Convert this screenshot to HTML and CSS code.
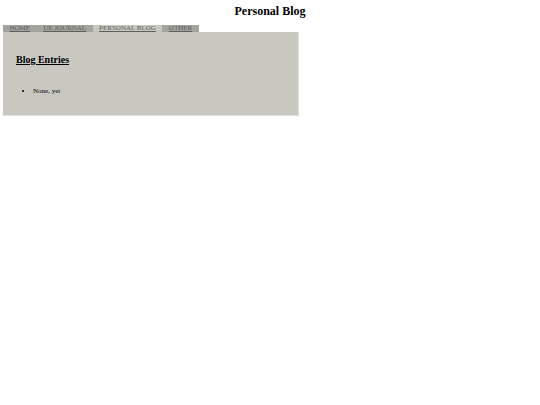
FILE: index.html
```html
<!DOCTYPE html>
<html>
<head>
<meta charset="utf-8">
<title>Personal Blog</title>
<link rel="stylesheet" href="styles.css">
</head>
<body>
<h1 class="title">Personal Blog</h1>
<div class="wrap">
  <ul class="tabs">
    <li class="tab"><a href="#">HOME</a></li>
    <li class="tab"><a href="#">UE JOURNAL</a></li>
    <li class="tab active"><a href="#">PERSONAL BLOG</a></li>
    <li class="tab"><a href="#">OTHER</a></li>
  </ul>
  <div class="panel">
    <h2 class="heading">Blog Entries</h2>
    <ul class="entries">
      <li>None, yet</li>
    </ul>
  </div>
</div>
</body>
</html>
```
FILE: styles.css
```css
html, body {
  margin: 0;
  padding: 0;
  background: #ffffff;
  font-family: "Liberation Serif", "Times New Roman", serif;
  color: #000;
}
.title {
  margin: 0;
  padding-top: 4px;
  height: 21px;
  text-align: center;
  font-size: 12px;
  line-height: 14px;
  font-weight: bold;
}
.wrap {
  margin-left: 3px;
  width: 296px;
}
.tabs {
  list-style: none;
  margin: 0;
  padding: 0;
  display: flex;
  height: 7px;
}
.tab {
  background: #a4a49e;
  padding: 0 6.5px;
  height: 7px;
  font-size: 7px;
  line-height: 7px;
}
.tab a {
  color: #5e5e5a;
  text-decoration: underline;
}
.tab.active {
  background: #c8c8c0;
}
.panel {
  background: #c8c8c0;
  height: 84px;
  padding: 22px 0 0 13px;
  box-sizing: border-box;
  border-right: 1px solid #e0e0da;
  border-bottom: 1px solid #e0e0da;
}
.heading {
  margin: 0;
  font-size: 10px;
  line-height: 12px;
  font-weight: bold;
  text-decoration: underline;
}
.entries {
  margin: 21px 0 0 0;
  padding-left: 17px;
  font-size: 7px;
  line-height: 9px;
}
```
